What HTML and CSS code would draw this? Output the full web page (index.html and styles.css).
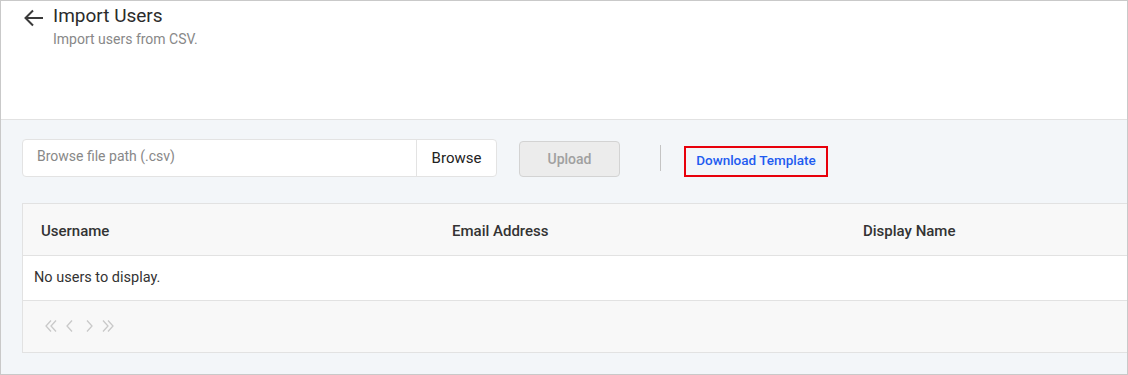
FILE: index.html
```html
<!DOCTYPE html>
<html>
<head>
<meta charset="utf-8">
<link rel="stylesheet" href="styles.css">
</head>
<body>
<div class="page">
  <header class="header">
    <svg class="back" width="20" height="18" viewBox="0 0 20 18"><path d="M19 9H2M9 1.5L1.5 9L9 16.5" fill="none" stroke="#3a3a3a" stroke-width="2"/></svg>
    <div class="titles">
      <h1 class="title">Import Users</h1>
      <p class="subtitle">Import users from CSV.</p>
    </div>
  </header>
  <main class="content">
    <div class="toolbar">
      <div class="file-input">
        <span class="placeholder">Browse file path (.csv)</span>
        <span class="browse">Browse</span>
      </div>
      <button class="upload">Upload</button>
      <span class="divider"></span>
      <a class="download">Download Template</a>
    </div>
    <div class="table">
      <div class="thead">
        <div class="th">Username</div>
        <div class="th">Email Address</div>
        <div class="th">Display Name</div>
      </div>
      <div class="empty">No users to display.</div>
      <div class="tfoot">
        <svg class="pager" width="72" height="14" viewBox="0 0 72 14">
          <g fill="none" stroke="#c9c9c9" stroke-width="1.3">
            <path d="M6 1.5L1 7L6 12.5M11 1.5L6 7L11 12.5"/>
            <path d="M27 1.5L22 7L27 12.5"/>
            <path d="M42 1.5L47 7L42 12.5"/>
            <path d="M58 1.5L63 7L58 12.5M63 1.5L68 7L63 12.5"/>
          </g>
        </svg>
      </div>
    </div>
  </main>
</div>
</body>
</html>
```

FILE: styles.css
```css
* { box-sizing: border-box; }
html, body { margin: 0; padding: 0; }
body { font-family: Roboto, "Liberation Sans", sans-serif; color: #333; }
.page {
  width: 1128px; height: 375px;
  border: 1px solid #c9c9c9;
  overflow: hidden;
  background: #f3f6f9;
}
.header {
  height: 119px;
  background: #fff;
  border-bottom: 1px solid #e2e2e2;
  display: flex;
  align-items: flex-start;
  padding: 4px 0 0 23px;
}
.back { margin-top: 4px; margin-right: 9px; flex: none; }
.title { margin: 0; font-size: 19px; font-weight: 400; color: #2b2b2b; line-height: 22px; }
.subtitle { margin: 4px 0 0; font-size: 14px; color: #888; line-height: 17px; }
.content { padding: 19px 0 0 21px; }
.toolbar { display: flex; align-items: center; height: 38px; }
.file-input {
  width: 475px; height: 38px;
  background: #fff;
  border: 1px solid #e3e3e3;
  border-radius: 4px;
  display: flex; align-items: stretch;
}
.placeholder { flex: 1; padding: 8px 0 0 14px; font-size: 14px; color: #888; }
.browse {
  width: 80px; border-left: 1px solid #e3e3e3;
  display: flex; align-items: center; justify-content: center;
  font-size: 15px; color: #222;
}
.upload {
  margin-left: 22px; margin-top: 2px;
  width: 101px; height: 36px;
  background: #ececec;
  border: 1px solid #d3d3d3;
  border-radius: 4px;
  font-family: inherit; font-size: 14px; font-weight: 500; color: #a0a0a0;
}
.divider { width: 1px; height: 26px; background: #c4c4c4; margin-left: 40px; }
.download {
  margin-left: 23px; margin-top: 7px;
  width: 144px; height: 31px;
  border: 2px solid #e8000b;
  display: flex; align-items: center; justify-content: center;
  font-size: 13.5px; font-weight: 500; color: #1f5cf0;
  padding-bottom: 3px;
}
.table {
  margin-top: 26px;
  width: 1240px;
  border: 1px solid #e2e2e2;
  background: #f8f8f8;
}
.thead { display: grid; grid-template-columns: 411px 411px 411px; height: 52px; border-bottom: 1px solid #e2e2e2; }
.th { padding: 3px 0 0 18px; display: flex; align-items: center; font-size: 15px; font-weight: 500; color: #333; }
.empty { height: 45px; background: #fff; border-bottom: 1px solid #e2e2e2; padding: 0 0 2px 11px; display: flex; align-items: center; font-size: 14.5px; color: #333; }
.tfoot { height: 51px; display: flex; align-items: center; padding: 0 0 2px 22px; }
```
